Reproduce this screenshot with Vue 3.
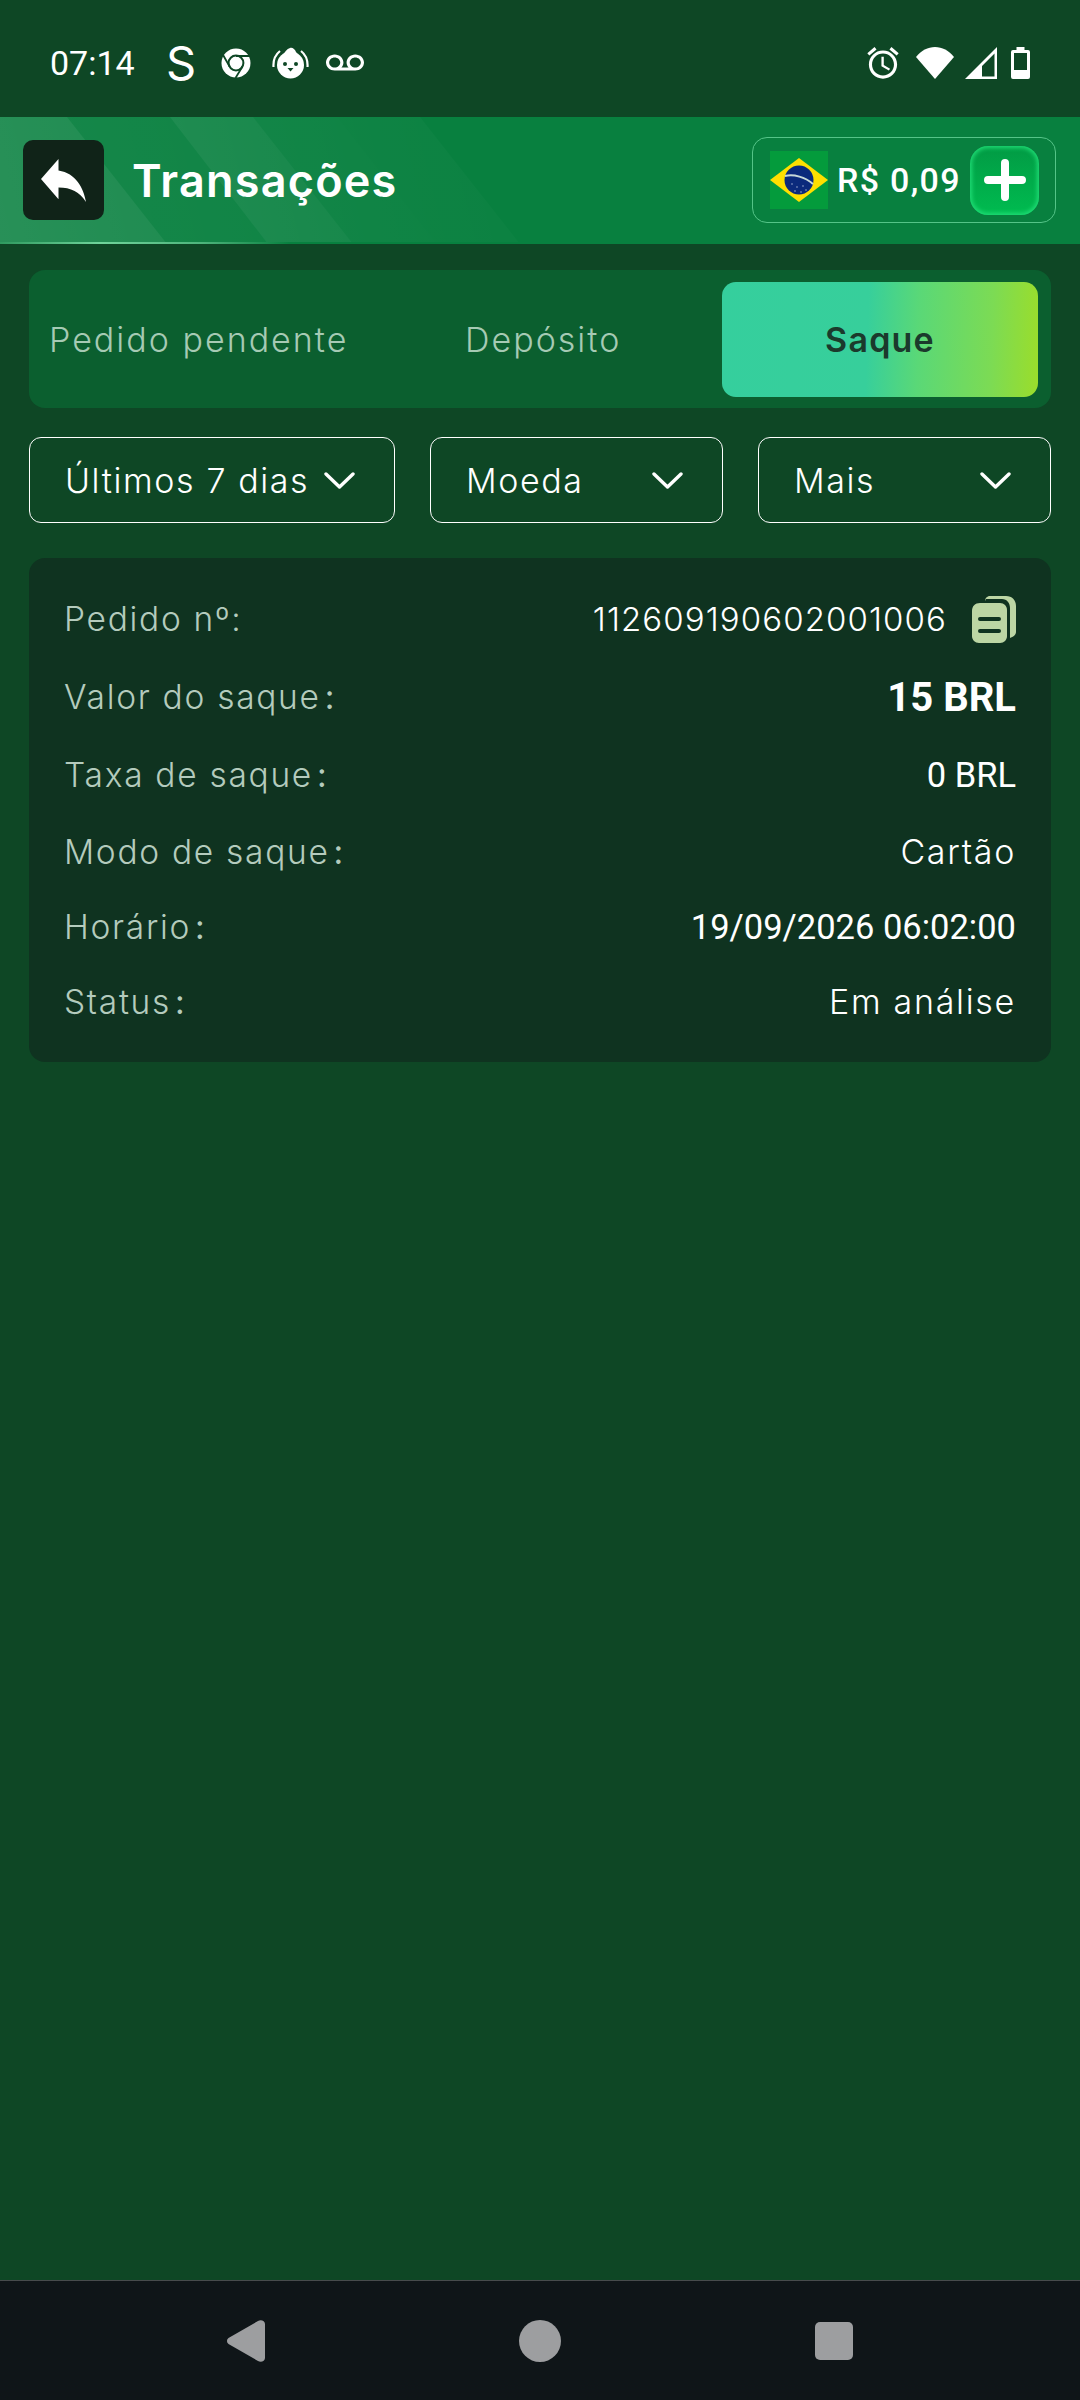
<template>
  <div class="screen">
    <div class="status-bar">
      <span class="clock">07:14</span>
      <span class="s-icon">S</span>
      <svg class="ic-chrome" viewBox="0 0 30 30">
        <circle cx="15" cy="15" r="14.5" fill="#fff" />
        <circle cx="15" cy="15" r="7.4" fill="none" stroke="#0e4725" stroke-width="2" />
        <circle cx="15" cy="15" r="5" fill="#fff" />
        <path d="M15 8H29M21.5 18.5L14.5 30M8.6 18.5L1.5 6" stroke="#0e4725" stroke-width="1.8" fill="none" />
      </svg>
      <svg class="ic-duck" viewBox="0 0 37 33">
        <path d="M18 2C20 1 23 3 24 6L27 10H11C12 6 15 3 18 2Z" fill="#fff" />
        <circle cx="18.5" cy="19" r="13.5" fill="#fff" />
        <path d="M8 5C3 9 1 14 1.5 21M29 5C34 9 36 14 35.5 21" fill="none" stroke="#fff" stroke-width="2.2" />
        <circle cx="13" cy="18" r="2" fill="#0e4725" />
        <circle cx="24" cy="18" r="2" fill="#0e4725" />
        <path d="M15.5 22H21.5L18.5 25.5Z" fill="#0e4725" />
      </svg>
      <svg class="ic-vm" viewBox="0 5 24 13" preserveAspectRatio="none">
        <path fill="#fff" d="M18.5 6C15.46 6 13 8.46 13 11.5c0 1.33.47 2.55 1.26 3.5H9.74c.79-.95 1.26-2.17 1.26-3.5C11 8.46 8.54 6 5.5 6S0 8.46 0 11.5 2.46 17 5.5 17h13c3.04 0 5.5-2.46 5.5-5.5S21.54 6 18.5 6zm-13 9C3.57 15 2 13.43 2 11.5S3.57 8 5.5 8 9 9.57 9 11.5 7.43 15 5.5 15zm13 0c-1.93 0-3.5-1.57-3.5-3.5S16.57 8 18.5 8 22 9.57 22 11.5 20.43 15 18.5 15z" />
      </svg>
      <span class="spacer"></span>
      <svg class="ic-alarm" viewBox="2 1.8 20 20.4">
        <path fill="#fff" d="M22 5.72l-4.6-3.86-1.29 1.53 4.6 3.86L22 5.72zM7.88 3.39L6.6 1.86 2 5.71l1.29 1.53 4.59-3.85zM12.5 8H11v6l4.75 2.85.75-1.23-4-2.37V8zM12 4c-4.97 0-9 4.03-9 9s4.03 9 9 9 9-4.03 9-9-4.03-9-9-9zm0 16c-3.87 0-7-3.13-7-7s3.13-7 7-7 7 3.13 7 7-3.13 7-7 7z" />
      </svg>
      <svg class="ic-wifi" viewBox="0 0 38 32">
        <path fill="#fff" d="M0 10C5 3.5 12 0 19 0S33 3.5 38 10L19 32Z" />
      </svg>
      <svg class="ic-signal" viewBox="0 0 32 32">
        <path fill="#fff" fill-rule="evenodd" d="M32 0V32H0ZM29.5 6.5 17 19V29.5H29.5Z" />
      </svg>
      <svg class="ic-battery" viewBox="0 0 19 32">
        <path fill="#fff" fill-rule="evenodd" d="M5.5 0H13.5V3H17A2 2 0 0 1 19 5V30A2 2 0 0 1 17 32H2A2 2 0 0 1 0 30V5A2 2 0 0 1 2 3H5.5ZM3 6V23H16V6Z" />
      </svg>
    </div>

    <header class="top-bar">
      <svg class="stripes" viewBox="0 0 560 126" preserveAspectRatio="none">
        <defs>
          <linearGradient id="faixa" gradientUnits="userSpaceOnUse" x1="0" y1="126" x2="500" y2="0">
            <stop offset="0" stop-color="#fff" stop-opacity="1" />
            <stop offset="1" stop-color="#fff" stop-opacity="0.25" />
          </linearGradient>
        </defs>
        <path d="M0 0H67L167 126H0Z" fill="url(#faixa)" opacity="0.13" />
        <path d="M67 0H170L268 126H167Z" fill="url(#faixa)" opacity="0.06" />
        <path d="M170 0H253L353 126H268Z" fill="url(#faixa)" opacity="0.13" />
        <path d="M253 0H337L437 126H353Z" fill="url(#faixa)" opacity="0.07" />
        <path d="M337 0H420L520 126H437Z" fill="url(#faixa)" opacity="0.06" />
      </svg>
      <button class="back-btn">
        <svg viewBox="3 5 18 15" class="back-icon" preserveAspectRatio="none">
          <path fill="#fff" d="M10 9V5l-7 7 7 7v-4.1c5 0 8.5 1.6 11 5.1-1-5-4-10-11-11z" />
        </svg>
      </button>
      <h1 class="title">Transações</h1>
      <div class="balance">
        <svg class="flag" viewBox="0 0 58 58">
          <rect width="58" height="58" fill="#049b3c" />
          <path d="M0 29L29 7L58 29L29 51Z" fill="#fedf00" />
          <circle cx="29" cy="29" r="14.5" fill="#0b2a7c" />
          <path d="M15 25C24 23 35 26 43 33" fill="none" stroke="#c6d8d8" stroke-width="2" />
          <g fill="#b9c8e0">
            <circle cx="22" cy="33" r="0.7" /><circle cx="27" cy="36" r="0.7" /><circle cx="33" cy="35" r="0.7" />
            <circle cx="36" cy="39" r="0.7" /><circle cx="25" cy="40" r="0.7" /><circle cx="31" cy="41" r="0.7" />
          </g>
        </svg>
        <span class="amount">R$ 0,09</span>
        <button class="add-btn">
          <svg viewBox="0 0 42 42" class="add-icon">
            <path d="M21 4V38M4 21H38" stroke="#fff" stroke-width="8" stroke-linecap="round" fill="none" />
          </svg>
        </button>
      </div>
    </header>

    <main class="content">
      <div class="tabs">
        <div v-for="tab in tabs" :key="tab" class="tab" :class="{ active: tab === activeTab }">{{ tab }}</div>
      </div>

      <div class="filters">
        <div v-for="f in filtros" :key="f.nome" class="filter" :class="f.cls">
          <span>{{ f.nome }}</span>
          <svg class="chevron" viewBox="0 0 31 17">
            <path d="M2 2L15.5 15L29 2" fill="none" stroke="#fff" stroke-width="3.4" stroke-linecap="round" stroke-linejoin="round" />
          </svg>
        </div>
      </div>

      <section class="card">
        <div class="row">
          <span class="label">Pedido nº:</span>
          <span class="value-wrap">
            <span class="value order">112609190602001006</span>
            <svg class="copy" viewBox="0 0 44 47">
              <path fill="#bcd6a4" d="M13 5C13 2.5 15 0 18 0H34C40 0 44 4 44 10V36C44 39 41 41 38 42V12C38 7 35 3 30 3H14Z" />
              <path fill="#bcd6a4" d="M8 7H28C32 7 35 10 35 14V40C35 44 32 47 28 47H7C3 47 0 44 0 40V15C0 10 3 7 8 7Z" />
              <path fill="none" stroke="#0f3320" stroke-width="4" stroke-linecap="round" d="M8 23H27M8 35H27" />
            </svg>
          </span>
        </div>
        <div class="row">
          <span class="label">Valor do saque<i class="dots">:</i></span>
          <span class="num strong">15 BRL</span>
        </div>
        <div class="row">
          <span class="label">Taxa de saque<i class="dots">:</i></span>
          <span class="num">0 BRL</span>
        </div>
        <div class="row short">
          <span class="label">Modo de saque<i class="dots">:</i></span>
          <span class="value">Cartão</span>
        </div>
        <div class="row short">
          <span class="label">Horário<i class="dots">:</i></span>
          <span class="num">19/09/2026 06:02:00</span>
        </div>
        <div class="row short">
          <span class="label">Status<i class="dots">:</i></span>
          <span class="value">Em análise</span>
        </div>
      </section>
    </main>

    <nav class="nav-bar">
      <svg class="nav-back" viewBox="0 0 38 42">
        <path fill="#9d9ea0" d="M1.5 18L31 1C34 -1 38 1 38 4V38C38 41 34 43 31 41L1.5 24C-0.5 22.5 -0.5 19.5 1.5 18Z" />
      </svg>
      <span class="nav-home"></span>
      <span class="nav-square"></span>
    </nav>
  </div>
</template>

<script setup>
import { ref } from 'vue'

const tabs = ['Pedido pendente', 'Depósito', 'Saque']
const activeTab = ref('Saque')

const filtros = [
  { nome: 'Últimos 7 dias', cls: 'f-dias' },
  { nome: 'Moeda', cls: 'f-moeda' },
  { nome: 'Mais', cls: 'f-mais' }
]
</script>

<style scoped>
.screen {
  display: flex;
  flex-direction: column;
  width: 1080px;
  height: 2400px;
  overflow: hidden;
  background: #0e4725;
  font-family: "Inter", "Liberation Sans", sans-serif;
  color: #fff;
}

/* barra de status */
.status-bar {
  display: flex;
  align-items: center;
  height: 117px;
  padding: 8px 50px 0 50px;
  box-sizing: border-box;
  background: #0e4725;
}
.clock {
  width: 116px;
  font-family: "Roboto", sans-serif;
  font-size: 34px;
}
.s-icon {
  width: 55px;
  font-size: 47px;
  line-height: 1;
}
.ic-chrome { width: 30px; height: 30px; margin-right: 21px; }
.ic-duck { width: 37px; height: 33px; margin-right: 17px; }
.ic-vm { width: 38px; height: 19px; }
.spacer { flex: 1; }
.ic-alarm { width: 32px; height: 32px; margin-right: 17px; }
.ic-wifi { width: 38px; height: 32px; margin-right: 11px; }
.ic-signal { width: 32px; height: 32px; margin-right: 14px; }
.ic-battery { width: 19px; height: 32px; }

/* cabeçalho */
.top-bar {
  position: relative;
  display: flex;
  align-items: center;
  height: 127px;
  padding: 0 24px 1px 23px;
  box-sizing: border-box;
  background: #08803f;
}
.top-bar::after {
  content: "";
  position: absolute;
  left: 0;
  right: 0;
  bottom: 0;
  height: 2px;
  background: linear-gradient(90deg, #2f9a5f 0, #70d49b 100px, #4fb57d 200px, #08803f 290px);
}
.stripes {
  position: absolute;
  left: 0;
  top: 0;
  width: 560px;
  height: 100%;
}
.back-btn {
  position: relative;
  display: flex;
  align-items: center;
  justify-content: center;
  width: 81px;
  height: 80px;
  padding: 0;
  border: none;
  border-radius: 10px;
  background: #102318;
}
.back-icon { width: 45px; height: 43px; }
.title {
  position: relative;
  margin: 0 0 0 28px;
  font-size: 45px;
  font-weight: 600;
  letter-spacing: 1.2px;
}
.balance {
  position: relative;
  display: flex;
  align-items: center;
  width: 304px;
  height: 86px;
  margin-left: auto;
  padding: 0 16px 0 17px;
  box-sizing: border-box;
  border: 1.5px solid #55c488;
  border-radius: 15px;
}
.flag { width: 58px; height: 58px; flex-shrink: 0; }
.amount {
  margin-left: 9px;
  font-family: "Roboto", sans-serif;
  font-size: 34px;
  font-weight: 500;
  letter-spacing: 1.3px;
  white-space: nowrap;
}
.add-btn {
  display: flex;
  align-items: center;
  justify-content: center;
  width: 69px;
  height: 69px;
  margin-left: auto;
  padding: 0;
  border: none;
  border-radius: 18px;
  background: linear-gradient(180deg, #029a44, #00bc50);
  box-shadow: inset 0 0 4px 2px #1fdc75;
}
.add-icon { width: 42px; height: 42px; }

/* conteúdo */
.content {
  flex: 1;
  display: flex;
  flex-direction: column;
  padding: 26px 29px 0;
}
.tabs {
  display: flex;
  align-items: center;
  height: 138px;
  box-sizing: border-box;
  padding: 0 13px 0 20px;
  border-radius: 16px;
  background: #0b5f2f;
}
.tab {
  font-size: 34px;
  font-weight: 300;
  letter-spacing: 2px;
  color: #a6cab4;
  white-space: nowrap;
}
.tab:nth-child(1) { width: 416px; }
.tab:nth-child(2) { width: 257px; }
.tab.active {
  flex: 1;
  display: flex;
  align-items: center;
  justify-content: center;
  height: 115px;
  border-radius: 14px;
  background: linear-gradient(92deg, #35cf9d 0%, #37cf9b 46%, #5ad877 62%, #7cdb54 85%, #9bdd2b 100%);
  color: #1b3a2c;
  font-weight: 600;
  letter-spacing: 1.2px;
}
.filters {
  display: flex;
  justify-content: space-between;
  margin-top: 29px;
}
.filter {
  display: flex;
  align-items: center;
  justify-content: space-between;
  height: 86px;
  box-sizing: border-box;
  padding: 0 39px 0 35px;
  border: 1.5px solid #fff;
  border-radius: 12px;
  font-size: 34px;
  font-weight: 300;
  letter-spacing: 1.6px;
}
.f-dias { width: 366px; }
.f-moeda { width: 293px; }
.f-mais { width: 293px; }
.chevron { width: 31px; height: 17px; }

.card {
  display: flex;
  flex-direction: column;
  margin-top: 35px;
  padding: 22px 35px 23px;
  border-radius: 16px;
  background: #0f3320;
}
.row {
  display: flex;
  align-items: center;
  justify-content: space-between;
  height: 78px;
}
.row.short { height: 75px; }
.label {
  font-size: 33.5px;
  font-weight: 300;
  letter-spacing: 1.7px;
  color: #b4cbbd;
}
.dots {
  margin-left: 4px;
  font-style: normal;
  font-weight: 400;
}
.value {
  font-size: 34px;
  font-weight: 300;
  letter-spacing: 1.7px;
  color: #fff;
}
.value.order {
  font-size: 33px;
  letter-spacing: 1.1px;
}
.value-wrap {
  display: flex;
  align-items: center;
  gap: 25px;
}
.copy { width: 44px; height: 47px; }
.num {
  font-family: "Roboto", sans-serif;
  font-size: 34.5px;
  color: #fff;
}
.num.strong {
  font-size: 40px;
  font-weight: 700;
}

/* navegação */
.nav-bar {
  position: relative;
  display: flex;
  align-items: center;
  justify-content: space-between;
  height: 120px;
  box-sizing: border-box;
  padding: 0 227px 0 227px;
  border-top: 1px solid #474b4c;
  background: #0f1518;
}
.nav-back { width: 38px; height: 42px; }
.nav-home {
  width: 42px;
  height: 42px;
  border-radius: 50%;
  background: #9d9ea0;
}
.nav-square {
  width: 38px;
  height: 38px;
  border-radius: 5px;
  background: #9d9ea0;
}
</style>
